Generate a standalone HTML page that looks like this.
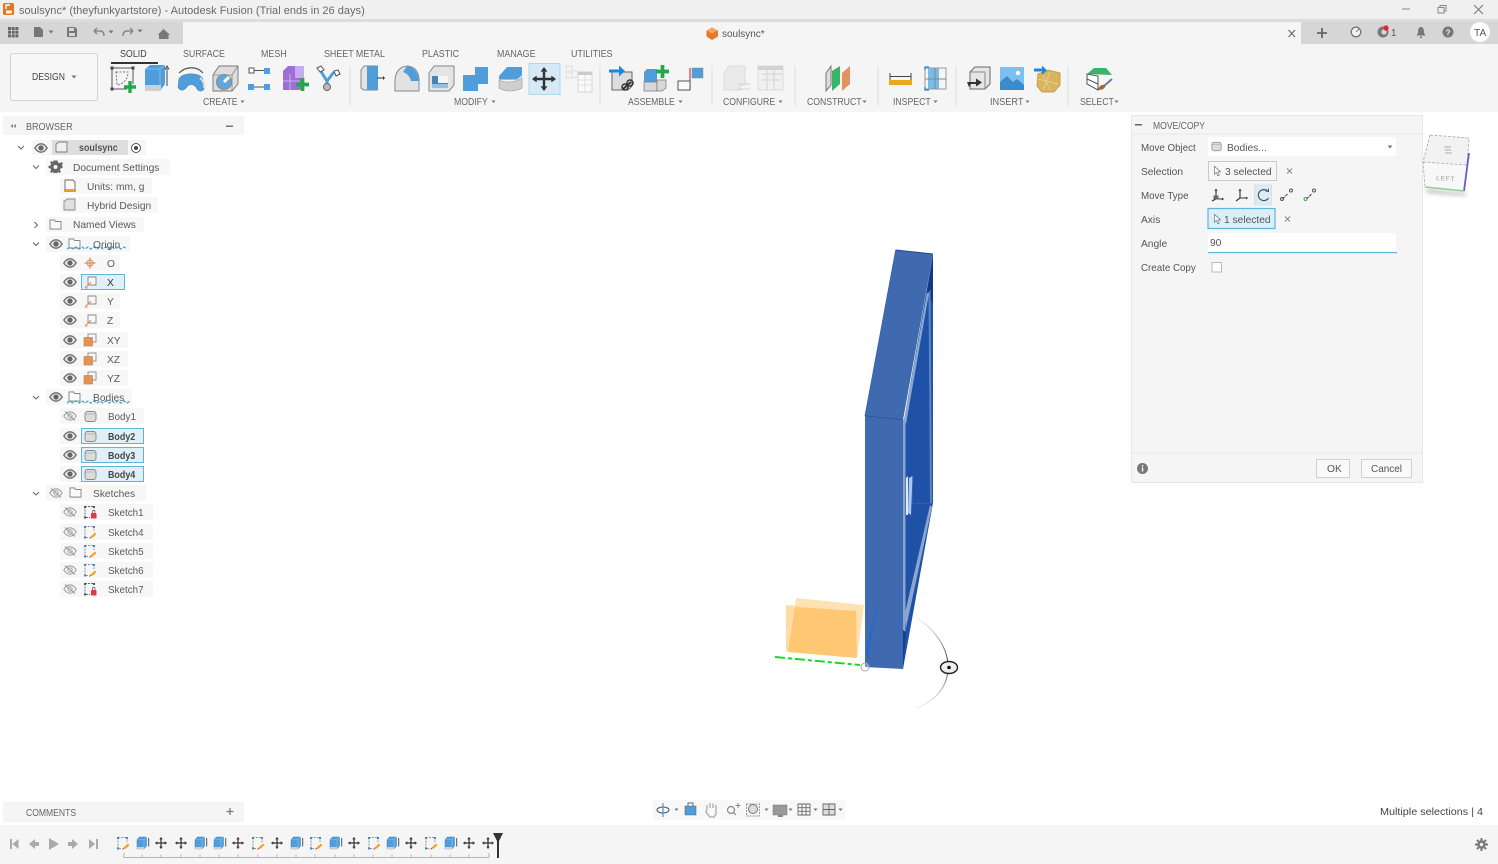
<!DOCTYPE html>
<html lang="en"><head><meta charset="utf-8"><title>soulsync - Autodesk Fusion</title>
<style>
html,body{margin:0;padding:0;background:#fff;width:1498px;height:864px;overflow:hidden}
svg{display:block;position:absolute;left:0;top:0;filter:blur(.3px)}
text{font-family:"Liberation Sans",sans-serif;font-size:10.5px;fill:#5a5a5a;transform-box:fill-box;transform-origin:0 50%;transform:scaleX(var(--s,.975))}
.tab{font-size:10px;fill:#666;--s:.89}
.grp{font-size:10px;fill:#666;--s:.87}
.c{--s:.86}
.l{--s:.94}
.b{font-weight:bold;fill:#454545;--s:.85}
</style></head><body>
<svg width="1498" height="864" viewBox="0 0 1498 864" xmlns="http://www.w3.org/2000/svg">
<defs>
<symbol id="eye" viewBox="0 0 14 10" overflow="visible"><path d="M.8 5C3 1.6 5 .8 7 .8S11 1.6 13.2 5C11 8.4 9 9.2 7 9.2S3 8.4 .8 5Z" fill="#e8e8e8" stroke="#6f6f6f" stroke-width="1.3"/><circle cx="7" cy="5" r="2.6" fill="#666"/></symbol>
<symbol id="eyeoff" viewBox="0 0 14 10" overflow="visible"><path d="M.8 5C3 1.6 5 .8 7 .8S11 1.6 13.2 5C11 8.4 9 9.2 7 9.2S3 8.4 .8 5Z" fill="none" stroke="#a0a0a0" stroke-width="1.1"/><circle cx="7" cy="5" r="2.2" fill="none" stroke="#a0a0a0"/><path d="M2 .5 12 9.5" stroke="#999" stroke-width="1.1"/></symbol>
<symbol id="folder" viewBox="0 0 14 12" overflow="visible"><path d="M1 11V1H6L7 2.8H13V11Z" fill="#fafafa" stroke="#777" stroke-width=".9"/></symbol>
<symbol id="body" viewBox="0 0 13 13" overflow="visible"><rect x="1" y="1.5" width="11" height="10" rx="2.5" fill="#dcdcdc" stroke="#888" stroke-width=".9"/><path d="M1.5 4H11.5" stroke="#aaa" stroke-width=".7"/></symbol>
<symbol id="plane" viewBox="0 0 14 14" overflow="visible"><path d="M4 2H12V10H4Z" fill="#f8f8f8" stroke="#888" stroke-width=".9"/><path d="M1 13 7 7" stroke="#e08a50" stroke-width="1.1"/><path d="M1 13H4" stroke="#e08a50" stroke-width=".7"/></symbol>
<symbol id="pl2" viewBox="0 0 14 14" overflow="visible"><rect x="5" y="1" width="8" height="8" fill="#fafafa" stroke="#888" stroke-width=".9"/><rect x="1" y="4.5" width="8.5" height="8.5" fill="#e19456" stroke="#c97b3f" stroke-width=".6"/></symbol>
<symbol id="sklock" viewBox="0 0 14 14" overflow="visible"><path d="M2 1.5H11M2 1.5V12.5H7" fill="none" stroke="#666" stroke-width=".9" stroke-dasharray="2 1"/><rect x="1" y="1" width="2" height="2" fill="#555"/><rect x="1" y="11.5" width="2" height="2" fill="#555"/><rect x="10" y="1" width="2" height="2" fill="#555"/><rect x="8" y="8" width="5.5" height="5.5" rx=".8" fill="#d83c48"/><path d="M9.4 8V6.6a1.3 1.3 0 0 1 2.6 0V8" fill="none" stroke="#b7454f" stroke-width=".8"/></symbol>
<symbol id="skedit" viewBox="0 0 14 14" overflow="visible"><path d="M2 1.5H11V6M2 1.5V12.5H6" fill="none" stroke="#777" stroke-width=".8" stroke-dasharray="2 1"/><rect x="1" y="1" width="2" height="2" fill="#3b8bd0"/><rect x="1" y="11.5" width="2" height="2" fill="#3b8bd0"/><rect x="10" y="1" width="2" height="2" fill="#3b8bd0"/><path d="M7 13 8 11 12 7.5 13.5 9 10 12.5Z" fill="#f0a526"/><path d="M6.5 13.5 8 12" stroke="#d9462e" stroke-width="1"/></symbol>
<symbol id="extr" viewBox="0 0 14 14" overflow="visible"><path d="M1 3.5 3.5 1H10.5V10L8 13H1Z" fill="#4f9edb" stroke="#3b7fb5" stroke-width=".5"/><path d="M1 3.5H8V13M8 3.5 10.5 1" fill="none" stroke="#8cc3ea" stroke-width=".6"/><path d="M1 11H8V13.5H1Z" fill="#cfcfcf"/><path d="M12.7 2V10.5" stroke="#555" stroke-width="1"/></symbol>
<symbol id="move" viewBox="0 0 14 14" overflow="visible"><path d="M7 .8V13.2M.8 7H13.2" stroke="#333" stroke-width="1.4"/><path d="M7 0 9 2.7H5ZM7 14 9 11.3H5ZM0 7 2.7 5V9ZM14 7 11.3 5V9Z" fill="#333"/></symbol>
<symbol id="plus" viewBox="0 0 12 12" overflow="visible"><path d="M4.3 0H7.7V4.3H12V7.7H7.7V12H4.3V7.7H0V4.3H4.3Z" fill="#22a84a"/></symbol>
<symbol id="caret" viewBox="0 0 6 4" overflow="visible"><path d="M.5 .5H5.5L3 3.5Z" fill="#777"/></symbol>
<symbol id="cursor" viewBox="0 0 10 12" overflow="visible"><path d="M1.5 .8 8.5 7H5.4L6.8 10.6 5.2 11.2 3.7 7.6 1.5 9.6Z" fill="#fff" stroke="#777" stroke-width=".8"/></symbol>
<linearGradient id="arc" gradientUnits="userSpaceOnUse" x1="0" y1="618" x2="0" y2="708"><stop offset="0" stop-color="#999" stop-opacity=".15"/><stop offset=".45" stop-color="#444"/><stop offset=".55" stop-color="#444"/><stop offset="1" stop-color="#999" stop-opacity=".15"/></linearGradient>
<filter id="sh" x="-30%" y="-30%" width="160%" height="160%"><feGaussianBlur stdDeviation="2"/></filter>
</defs>

<!-- Frame -->
<rect width="1498" height="864" fill="#fff"/>
<rect width="1498" height="19" fill="#f0f0f0"/>
<rect y="19" width="1498" height="3" fill="#dcdcdc"/>
<rect y="22" width="1498" height="90" fill="#f5f5f5"/>
<rect y="22" width="183" height="22" fill="#d6d6d6"/>
<rect x="1301" y="22" width="197" height="22" fill="#d6d6d6"/>

<!-- Title -->
<rect x="3" y="3" width="11" height="12" rx="1.5" fill="#e8761e"/><rect x="6" y="10.5" width="6" height="3" fill="#fff" opacity=".9"/><path d="M6 9V5H10" stroke="#fff" stroke-width="1.4" fill="none"/>
<text x="19" y="14" style="font-size:11px;fill:#6a6a6a;--s:1.005">soulsync* (theyfunkyartstore) - Autodesk Fusion (Trial ends in 26 days)</text>
<path d="M1402 9H1410" stroke="#888" stroke-width="1"/>
<path d="M1438 7.5H1444V13H1438ZM1440 7.5V5.5H1446V11H1444" fill="none" stroke="#888" stroke-width="1"/>
<path d="M1474 5 1483 14M1483 5 1474 14" stroke="#777" stroke-width="1"/>

<!-- Quick access -->
<g fill="#666"><rect x="8" y="27" width="3" height="3"/><rect x="11.7" y="27" width="3" height="3"/><rect x="15.4" y="27" width="3" height="3"/><rect x="8" y="30.7" width="3" height="3"/><rect x="11.7" y="30.7" width="3" height="3"/><rect x="15.4" y="30.7" width="3" height="3"/><rect x="8" y="34.4" width="3" height="3"/><rect x="11.7" y="34.4" width="3" height="3"/><rect x="15.4" y="34.4" width="3" height="3"/></g>
<path d="M34 27H40L43 30V37H34Z" fill="#777"/><use href="#caret" x="48" y="30" width="6" height="4"/>
<path d="M67 27H75L77 29V37H67Z" fill="#777"/><rect x="69" y="28" width="5" height="3" fill="#d6d6d6"/><rect x="69" y="33" width="6" height="3" fill="#d6d6d6"/>
<path d="M94 31H100C103 31 104 33 104 36M94 31 97 28M94 31 97 34" fill="none" stroke="#888" stroke-width="1.5"/><use href="#caret" x="108" y="30" width="6" height="4"/>
<path d="M133 31H127C124 31 123 33 123 36M133 31 130 28M133 31 130 34" fill="none" stroke="#888" stroke-width="1.5"/><use href="#caret" x="137" y="29" width="6" height="4"/>
<path d="M163.500 29 170 35H168.500V39H159V35H157.500Z" fill="#777"/>

<!-- Doc tab -->
<path d="M712 27.500 718 30.500V36.500L712 40 706.500 36.500V30.500Z" fill="#e8782a"/><path d="M706.500 30.500 712 33.500 718 30.500 712 27.500Z" fill="#f5a465"/>
<text x="722" y="37" style="font-size:10.5px;fill:#555;--s:.95">soulsync*</text>
<path d="M1288.500 30 1295 37M1295 30 1288.500 37" stroke="#666" stroke-width="1.1"/>
<path d="M1322 28V38M1317 33H1327" stroke="#666" stroke-width="1.800"/>
<circle cx="1356" cy="32" r="4.800" fill="#f3f3f3" stroke="#777" stroke-width="1.300"/><path d="M1356 32 1359 29" stroke="#777"/>
<circle cx="1383" cy="32" r="5.500" fill="#777"/><circle cx="1384" cy="32" r="2.600" fill="#d6d6d6"/><circle cx="1386" cy="28" r="2.600" fill="#e0242c"/>
<text x="1391" y="36" style="font-size:10px;fill:#555">1</text>
<path d="M1421 27C1418.500 27 1418 29.500 1418 33L1416.500 35.500H1425.500L1424 33C1424 29.500 1423.500 27 1421 27ZM1420 36.500H1422V38H1420Z" fill="#777"/>
<circle cx="1448" cy="32" r="5.500" fill="#777"/><text x="1445.500" y="35.500" style="font-size:8.500px;font-weight:bold;fill:#eee">?</text>
<circle cx="1480" cy="32" r="10" fill="#fff"/><text x="1474" y="36" style="font-size:10.500px;fill:#555">TA</text>

<!-- Tabs -->
<text class="tab" x="120" y="57" style="fill:#444">SOLID</text>
<rect x="111" y="62" width="47" height="2" fill="#333"/>
<text class="tab" x="183" y="57">SURFACE</text>
<text class="tab" x="261" y="57">MESH</text>
<text class="tab" x="324" y="57">SHEET METAL</text>
<text class="tab" x="422" y="57">PLASTIC</text>
<text class="tab" x="497" y="57">MANAGE</text>
<text class="tab" x="571" y="57">UTILITIES</text>

<!-- Design -->
<rect x="10.500" y="53.500" width="87" height="47" rx="2" fill="#f7f7f7" stroke="#d4d4d4"/>
<text x="32" y="80" class="c" style="font-size:10px;fill:#444">DESIGN</text><use href="#caret" x="71" y="75" width="6" height="4"/>

<!-- CREATE icons -->
<g><path d="M112 68H133V84M112 68V89H127" fill="none" stroke="#555" stroke-width="1"/><g fill="#444"><rect x="110.500" y="66.500" width="3" height="3"/><rect x="131.500" y="66.500" width="3" height="3"/><rect x="110.500" y="87.500" width="3" height="3"/></g><path d="M116 72H128C128 79 124 84 117 85Z" fill="none" stroke="#777" stroke-dasharray="2 1.500"/><use href="#plus" x="124" y="81" width="12" height="12"/></g>
<g><path d="M145 69 150 65H165V84L160 91H145Z" fill="#4f9edb"/><path d="M145 69H160V91M160 69 165 65" fill="none" stroke="#8cc3ea" stroke-width=".8"/><rect x="145" y="85" width="16" height="6" fill="#cfcfcf"/><path d="M167 68V86M165 69.500 167 66 169 69.500" fill="none" stroke="#444"/></g>
<g><path d="M179 79C183 72 199 72 203 79L204 89C202 92 198 92 196 87C192 83 189 84 186 88C183 91 180 91 178 87Z" fill="#4f9edb" stroke="#3f86bd" stroke-width=".6"/><path d="M179 73C186 66 197 66 203 73" fill="none" stroke="#555" stroke-width="1.200"/><path d="M200 78C203 80 205 84 204 88" stroke="#ddd" fill="none" stroke-width="2"/></g>
<g><path d="M213 75 219 66H238V84L232 91H213Z" fill="#ddd" stroke="#777" stroke-width=".9"/><path d="M213 75H232V91M232 75 238 66" fill="none" stroke="#888" stroke-width=".8"/><circle cx="224" cy="82" r="7.500" fill="#5fa8dd" stroke="#888"/><path d="M224 82 229 77" stroke="#fff" stroke-width="3"/></g>
<g><rect x="249" y="68" width="5" height="5" fill="#fff" stroke="#555"/><rect x="264" y="68" width="6" height="6" fill="#4f9edb"/><rect x="248" y="84" width="6" height="6" fill="#4f9edb"/><rect x="264" y="84" width="6" height="6" fill="#4f9edb"/><path d="M254 70.500H264M254 87H264" stroke="#555"/></g>
<g><path d="M283 71 288 66H304V84L300 90H283Z" fill="#9b6fd6"/><path d="M295 66H304V78H295Z" fill="#c7aceb"/><path d="M290 74V90M283 81H300" stroke="#c9b2ec"/><use href="#plus" x="296" y="78" width="13" height="13"/></g>
<g><path d="M320 70 327 81 334 72M327 81V88" fill="none" stroke="#4f9edb" stroke-width="3"/><path d="M317 68 321 66 324 70 320 72Z" fill="#fff" stroke="#555"/><path d="M334 71 338 70 340 74 336 76Z" fill="#fff" stroke="#555"/><circle cx="327" cy="87" r="3.500" fill="#bbb" stroke="#666"/></g>
<text class="grp" x="203" y="105">CREATE</text><use href="#caret" x="240" y="100" width="5" height="3.500"/>
<rect x="349.500" y="66" width="1" height="40" fill="#ddd"/>

<!-- MODIFY -->
<g><path d="M361 70 364 66H377V90H364L361 88Z" fill="#e4e4e4" stroke="#888"/><rect x="367" y="66" width="11" height="24" fill="#4f9edb"/><path d="M377 78H383" stroke="#333"/><path d="M383 76 385 78 383 80Z" fill="#333"/></g>
<g><path d="M395 81C395 72 400 66 408 66C415 67 419 72 419 80V91H395Z" fill="#e2e2e2" stroke="#888"/><path d="M407 66C414 67 419 73 419 81L411 81C410 77 408 74 403 72Z" fill="#4f9edb"/></g>
<g><path d="M429 73 434 66H454V85L449 91H429Z" fill="#e4e4e4" stroke="#888"/><path d="M432 76H448V88H432Z" fill="#3f86bd"/><path d="M438 76H448V83H438Z" fill="#f4f4f4"/><path d="M432 84H448V88H432Z" fill="#8cc3ea"/></g>
<g><path d="M463 75H475V67H488V84H478V91H463Z" fill="#4f9edb"/></g>
<g><path d="M499 80C505 83 515 83 522 78V88C515 92 505 92 499 88Z" fill="#cfcfcf" stroke="#999" stroke-width=".6"/><path d="M499 76 507 67H522V75L517 80H499Z" fill="#4f9edb"/><path d="M499 79.500H517L522 75.500" fill="none" stroke="#8cc3ea"/></g>
<rect x="529" y="63.500" width="31" height="31" fill="#d6eaf6" stroke="#b3d6ea"/>
<use href="#move" x="532" y="67" width="24" height="24"/>
<g opacity=".55"><g fill="none" stroke="#ccc"><rect x="566" y="66" width="6" height="5"/><rect x="572" y="71" width="6" height="6"/><rect x="566" y="73" width="6" height="5"/></g><rect x="578" y="72" width="14" height="20" fill="#fff" stroke="#bbb"/><rect x="578" y="72" width="14" height="3" fill="#aaa"/><path d="M578 80H592M578 85H592M585 75V92" stroke="#ccc"/></g>
<text class="grp" x="454" y="105">MODIFY</text><use href="#caret" x="491" y="100" width="5" height="3.500"/>
<rect x="599.500" y="66" width="1" height="40" fill="#ddd"/>

<!-- ASSEMBLE -->
<g><path d="M612 72H632V86L628 90H612Z" fill="#ddd" stroke="#666"/><path d="M609 71H620" stroke="#1e88d8" stroke-width="3"/><path d="M619 65.500 625 71 619 76.500Z" fill="#1e88d8"/><path d="M623 89 631 82" stroke="#333" stroke-width="2"/><circle cx="625" cy="87" r="3" fill="none" stroke="#333" stroke-width="1.500"/><circle cx="630" cy="83" r="3" fill="none" stroke="#333" stroke-width="1.500"/></g>
<g><path d="M644 72 647 69H657V82H644Z" fill="#4f9edb"/><path d="M644 82H657V91H644Z" fill="#d8d8d8" stroke="#777" stroke-width=".7"/><path d="M657 80H666V88L662 91H657Z" fill="#d8d8d8" stroke="#777" stroke-width=".7"/><use href="#plus" x="656" y="65" width="13" height="13"/></g>
<g><path d="M690 68V90" stroke="#c23b45" stroke-width="1.200"/><rect x="678" y="81" width="12" height="9" fill="#fafafa" stroke="#555"/><rect x="692" y="68" width="11" height="10" fill="#4f9edb" stroke="#888" stroke-width=".5"/></g>
<text class="grp" x="628" y="105">ASSEMBLE</text><use href="#caret" x="678" y="100" width="5" height="3.500"/>
<rect x="711.500" y="66" width="1" height="40" fill="#ddd"/>

<!-- CONFIGURE -->
<g opacity=".6"><path d="M724 73 729 66H745V85H740V90H724Z" fill="#e4e4e4" stroke="#ccc"/><path d="M738 84H750M738 89H750" stroke="#bbb"/><rect x="758" y="66" width="25" height="24" fill="#eee" stroke="#ccc"/><rect x="758" y="66" width="25" height="4" fill="#bbb"/><path d="M762 74H782M762 80H780M767 70V90M774 70V90" stroke="#bbb"/></g>
<text class="grp" x="723" y="105">CONFIGURE</text><use href="#caret" x="778" y="100" width="5" height="3.500"/>
<rect x="794.500" y="66" width="1" height="40" fill="#ddd"/>

<!-- CONSTRUCT -->
<g><path d="M826 73 831 66V85L826 91Z" fill="#ddd" stroke="#777"/><path d="M832 71 840 66V84L832 91Z" fill="#3bb46a"/><path d="M842 73 850 66V84L842 91Z" fill="#e49360"/></g>
<text class="grp" x="807" y="105">CONSTRUCT</text><use href="#caret" x="862" y="100" width="5" height="3.500"/>
<rect x="877.500" y="66" width="1" height="40" fill="#ddd"/>

<!-- INSPECT -->
<g><path d="M890 73V80M911 73V80M890 76.500H911" stroke="#444"/><rect x="889" y="80" width="23" height="5" fill="#e8a91e"/><rect x="928" y="68" width="11" height="11" fill="#78bcea"/><rect x="928" y="79" width="11" height="10" fill="#78bcea"/><path d="M925 68H946V89H925Z" fill="none" stroke="#999"/><path d="M935 68V89M925 79H946" stroke="#888"/><path d="M929 67H925V70M925 87V90H929" fill="none" stroke="#1e88d8" stroke-width="1.300"/></g>
<text class="grp" x="893" y="105">INSPECT</text><use href="#caret" x="933" y="100" width="5" height="3.500"/>
<rect x="955.500" y="66" width="1" height="40" fill="#ddd"/>

<!-- INSERT -->
<g><path d="M970 72 975 67H990V84L985 89H970Z" fill="#e6e6e6" stroke="#666"/><path d="M970 72H985V89" fill="none" stroke="#888"/><path d="M967 82H976V78.500L982 82.500 976 86.500V84H971L969 87Z" fill="#333"/></g>
<g><rect x="1000" y="67" width="24" height="23" fill="#7bc0f0"/><circle cx="1018" cy="73" r="2.200" fill="#fff"/><path d="M1000 90V82L1007 76 1013 82 1017 79 1024 85V90Z" fill="#3a8bcb"/></g>
<g><path d="M1038 74 1048 70 1060 73V85L1054 92H1042L1037 86Z" fill="#d9b45e" stroke="#c79f46"/><path d="M1038 79 1058 84M1042 73 1050 90M1050 72 1043 90" stroke="#ecd391" stroke-width=".8"/><path d="M1034 70H1043" stroke="#1e88d8" stroke-width="3"/><path d="M1042 65.500 1047 70.500 1042 75Z" fill="#1e88d8"/></g>
<text class="grp" x="990" y="105" style="--s:.92">INSERT</text><use href="#caret" x="1025" y="100" width="5" height="3.500"/>
<rect x="1067.500" y="66" width="1" height="40" fill="#ddd"/>

<!-- SELECT -->
<g><path d="M1087 74 1094 68H1106L1112 75Z" fill="#3bb46a"/><path d="M1087 74V84L1098 90V76Z" fill="#fff" stroke="#555"/><path d="M1087 79 1098 84" stroke="#555"/><path d="M1112 79 1104 86" stroke="#6d7c9a" stroke-width="2"/><path d="M1098 90C1099 86 1102 84 1105 85C1106 88 1103 90 1098 90Z" fill="#9b6a3a"/></g>
<text class="grp" x="1080" y="105">SELECT</text><use href="#caret" x="1114" y="100" width="5" height="3.500"/>

<!-- Browser -->
<rect x="3" y="116" width="241" height="19" fill="#f5f5f5"/>
<path d="M13 124 10.500 126 13 128ZM16 124 13.500 126 16 128Z" fill="#888"/>
<text x="26" y="130" class="c" style="fill:#666">BROWSER</text>
<rect x="226" y="125.500" width="7" height="1.500" fill="#777"/>

<!-- Tree backgrounds -->
<g fill="#f7f7f7">
<rect x="32" y="140" width="114" height="15"/>
<rect x="46" y="159" width="124" height="16"/><rect x="60" y="178" width="92" height="16"/><rect x="60" y="197" width="98" height="16"/>
<rect x="46" y="217" width="98" height="15"/><rect x="46" y="236" width="84" height="16"/>
<rect x="60" y="255" width="60" height="16"/><rect x="60" y="274" width="20" height="16"/><rect x="60" y="293" width="60" height="16"/><rect x="60" y="312" width="60" height="16"/>
<rect x="60" y="332" width="68" height="16"/><rect x="60" y="351" width="68" height="16"/><rect x="60" y="370" width="68" height="16"/>
<rect x="46" y="389" width="86" height="16"/><rect x="60" y="408" width="84" height="16"/><rect x="60" y="428" width="20" height="16"/><rect x="60" y="447" width="20" height="16"/><rect x="60" y="466" width="20" height="16"/>
<rect x="46" y="485" width="100" height="16"/><rect x="60" y="504" width="93" height="16"/><rect x="60" y="524" width="93" height="16"/><rect x="60" y="543" width="93" height="16"/><rect x="60" y="562" width="93" height="16"/><rect x="60" y="581" width="93" height="16"/>
</g>
<rect x="52" y="140" width="76" height="15" fill="#dedede"/>
<g fill="#dff0f9" stroke="#62b3dc"><rect x="81.500" y="274.500" width="43" height="15"/><rect x="81.500" y="428.500" width="62" height="15"/><rect x="81.500" y="447.500" width="62" height="15"/><rect x="81.500" y="466.500" width="62" height="15"/></g>

<!-- Chevrons -->
<g fill="none" stroke="#666" stroke-width="1"><path d="M18 146 21 149 24 146M33 165.500 36 168.500 39 165.500M33 242.500 36 245.500 39 242.500M33 396 36 399 39 396M33 492 36 495 39 492M34.500 222 37.500 225 34.500 228"/></g>

<!-- Tree icons -->
<use href="#eye" x="34" y="143" width="14" height="10"/>
<path d="M56 144 59 142H67V152H56Z" fill="#efefef" stroke="#777" stroke-width=".9"/>
<circle cx="136" cy="148" r="4.500" fill="#fff" stroke="#555"/><circle cx="136" cy="148" r="2" fill="#444"/>
<path d="M55.500 161.500 57.500 161.500 58 163.500 60 164.300 61.700 163 63 164.300 61.800 166 62.500 167 62.500 169 60.500 169.500 59.800 171 61 172.600 59.700 174 58 172.800 57.500 174 53.500 174 53 172.800 51.300 174 50 172.600 51.200 171 50.500 169.500 48.500 169 48.500 167 50.500 166.500 51.200 165 50 163.500 51.300 162 53 163.300 53.500 161.500Z" fill="#666" transform="translate(0,-1)"/>
<circle cx="55.500" cy="167" r="2" fill="#f7f7f7"/>
<path d="M65 180H73L75 182V190H65Z" fill="#fafafa" stroke="#666" stroke-width=".9"/><rect x="64" y="190" width="12" height="2" fill="#e3a21a"/>
<path d="M65 201 67 199H75V210H64V201Z" fill="#e0e0e0" stroke="#888" stroke-width=".9"/>
<use href="#folder" x="49" y="219" width="13" height="11"/>
<use href="#eye" x="49" y="239" width="14" height="10"/><use href="#folder" x="68" y="238" width="13" height="11"/>
<path d="M67 249 70 247 73 249 76 247 79 249 82 247 85 249 88 247 91 249 94 247 97 249 100 247 103 249 106 247 109 249 112 247 115 249 118 247 121 249 124 247 127 249" fill="none" stroke="#3b9ad8" stroke-width="1.200" stroke-dasharray="3 1.500"/>
<use href="#eye" x="63" y="258" width="14" height="10"/>
<g stroke="#e08a50" fill="none"><circle cx="90" cy="263" r="3"/><path d="M90 257.500V268.500M84.500 263H95.500" stroke-width="1.200"/></g>
<use href="#eye" x="63" y="277" width="14" height="10"/><use href="#plane" x="84" y="275" width="14" height="14"/>
<use href="#eye" x="63" y="296" width="14" height="10"/><use href="#plane" x="84" y="294" width="14" height="14"/>
<use href="#eye" x="63" y="315" width="14" height="10"/><use href="#plane" x="84" y="313" width="14" height="14"/>
<use href="#eye" x="63" y="335" width="14" height="10"/><use href="#pl2" x="83" y="333" width="14" height="14"/>
<use href="#eye" x="63" y="354" width="14" height="10"/><use href="#pl2" x="83" y="352" width="14" height="14"/>
<use href="#eye" x="63" y="373" width="14" height="10"/><use href="#pl2" x="83" y="371" width="14" height="14"/>
<use href="#eye" x="49" y="392" width="14" height="10"/><use href="#folder" x="68" y="391" width="13" height="11"/>
<path d="M67 403 70 401 73 403 76 401 79 403 82 401 85 403 88 401 91 403 94 401 97 403 100 401 103 403 106 401 109 403 112 401 115 403 118 401 121 403 124 401 127 403 130 401" fill="none" stroke="#3b9ad8" stroke-width="1.200" stroke-dasharray="3 1.500"/>
<use href="#eyeoff" x="63" y="411" width="14" height="10"/><use href="#body" x="84" y="410" width="13" height="13"/>
<use href="#eye" x="63" y="431" width="14" height="10"/><use href="#body" x="84" y="430" width="13" height="13"/>
<use href="#eye" x="63" y="450" width="14" height="10"/><use href="#body" x="84" y="449" width="13" height="13"/>
<use href="#eye" x="63" y="469" width="14" height="10"/><use href="#body" x="84" y="468" width="13" height="13"/>
<use href="#eyeoff" x="49" y="488" width="14" height="10"/><use href="#folder" x="69" y="487" width="13" height="11"/>
<use href="#eyeoff" x="63" y="507" width="14" height="10"/><use href="#sklock" x="83" y="505" width="14" height="14"/>
<use href="#eyeoff" x="63" y="527" width="14" height="10"/><use href="#skedit" x="83" y="525" width="14" height="14"/>
<use href="#eyeoff" x="63" y="546" width="14" height="10"/><use href="#skedit" x="83" y="544" width="14" height="14"/>
<use href="#eyeoff" x="63" y="565" width="14" height="10"/><use href="#skedit" x="83" y="563" width="14" height="14"/>
<use href="#eyeoff" x="63" y="584" width="14" height="10"/><use href="#sklock" x="83" y="582" width="14" height="14"/>

<!-- Tree text -->
<text x="79" y="151" class="b" style="fill:#555">soulsync</text>
<text x="73" y="171">Document Settings</text>
<text x="87" y="190">Units: mm, g</text>
<text x="87" y="209">Hybrid Design</text>
<text x="73" y="228">Named Views</text>
<text x="93" y="248">Origin</text>
<text x="107" y="267">O</text>
<text x="107" y="286" style="fill:#333">X</text>
<text x="107" y="305">Y</text>
<text x="107" y="324">Z</text>
<text x="107" y="344">XY</text>
<text x="107" y="363">XZ</text>
<text x="107" y="382">YZ</text>
<text x="93" y="401">Bodies</text>
<text x="108" y="420" class="l">Body1</text>
<text x="108" y="440" class="b">Body2</text>
<text x="108" y="459" class="b">Body3</text>
<text x="108" y="478" class="b">Body4</text>
<text x="93" y="497">Sketches</text>
<text x="108" y="516" class="l">Sketch1</text>
<text x="108" y="536" class="l">Sketch4</text>
<text x="108" y="555" class="l">Sketch5</text>
<text x="108" y="574" class="l">Sketch6</text>
<text x="108" y="593" class="l">Sketch7</text>

<!-- Move/Copy panel -->
<rect x="1131.500" y="115.500" width="291" height="367" fill="#f5f5f5" stroke="#e6e6e6"/>
<path d="M1131 134H1423M1131 453H1423" stroke="#e6e6e6"/>
<rect x="1135" y="124" width="7" height="1.500" fill="#666"/>
<text x="1153" y="129" class="c" style="font-size:10px;fill:#666">MOVE/COPY</text>
<text x="1141" y="151" style="fill:#555;--s:.93">Move Object</text>
<text x="1141" y="175" style="fill:#555">Selection</text>
<text x="1141" y="199" style="fill:#555;--s:.93">Move Type</text>
<text x="1141" y="223" style="fill:#555">Axis</text>
<text x="1141" y="247" style="fill:#555">Angle</text>
<text x="1141" y="271" style="fill:#555;--s:.93">Create Copy</text>
<rect x="1208" y="137" width="188" height="19" fill="#fff"/>
<use href="#body" x="1211" y="141" width="11" height="11"/>
<text x="1227" y="151" style="fill:#555">Bodies...</text>
<use href="#caret" x="1387" y="145" width="6" height="4"/>
<rect x="1208.500" y="161.500" width="68" height="19" fill="#f7f7f7" stroke="#c9c9c9"/>
<use href="#cursor" x="1213" y="165" width="9" height="12"/>
<text x="1225" y="175" style="fill:#555">3 selected</text>
<path d="M1287 168.500 1292 173.500M1292 168.500 1287 173.500" stroke="#888"/>
<g fill="none" stroke="#333" stroke-width="1.100">
<path d="M1216 190V199M1216 199 1212 201M1216 199H1222"/><rect x="1213.500" y="195.500" width="5" height="4" fill="#666" stroke="none"/>
<path d="M1240 190V198M1240 198 1236 201M1240 198H1246"/>
</g>
<path d="M1216 188.500 1214.500 191H1217.500ZM1240 188.500 1238.500 191H1241.500ZM1222 197.500 1224 199 1222 200.500ZM1246 196.500 1248 198 1246 199.500Z" fill="#333"/>
<rect x="1254.500" y="185" width="17" height="20" fill="#dbecf6" stroke="#cfe3ef"/>
<path d="M1268 191.500A5.500 5.500 0 1 0 1268.500 198" fill="none" stroke="#555" stroke-width="1.200"/><path d="M1265.500 191 1268.500 191.500 1268.500 188.500" fill="none" stroke="#555"/>
<g fill="none" stroke="#333"><path d="M1282.500 199 1288 193.500" stroke-dasharray="3 1"/><circle cx="1282" cy="199" r="1.500" stroke="#555"/><circle cx="1291" cy="190.500" r="1.500" stroke="#555"/></g>
<g fill="none" stroke="#333"><path d="M1306.500 199 1312 193.500" stroke-dasharray="3 1"/><circle cx="1305.500" cy="199" r="1.500" stroke="#46a05a"/><circle cx="1314" cy="190.500" r="1.500" stroke="#555"/></g>
<rect x="1208" y="208.500" width="67" height="20" fill="#dbeff9" stroke="#62b3dc" stroke-width="1.200"/>
<use href="#cursor" x="1213" y="213" width="9" height="12"/>
<text x="1224" y="223" style="fill:#555">1 selected</text>
<path d="M1285 216.500 1290 221.500M1290 216.500 1285 221.500" stroke="#888"/>
<rect x="1208" y="233" width="188" height="19" fill="#fff"/>
<rect x="1208" y="252" width="189" height="1.200" fill="#62b3dc"/>
<text x="1210" y="246" style="fill:#555">90</text>
<rect x="1212" y="262.500" width="9.500" height="9.500" fill="#fff" stroke="#bbb"/>
<circle cx="1142.500" cy="468.500" r="5.500" fill="#777"/><rect x="1141.800" y="467.500" width="1.500" height="4" fill="#f5f5f5"/><rect x="1141.800" y="465" width="1.500" height="1.500" fill="#f5f5f5"/>
<rect x="1316.500" y="459.500" width="33" height="18" fill="#f9f9f9" stroke="#d0d0d0"/>
<text x="1327" y="472" style="fill:#555">OK</text>
<rect x="1361.500" y="459.500" width="50" height="18" fill="#f9f9f9" stroke="#d0d0d0"/>
<text x="1371" y="472" style="fill:#555;--s:.95">Cancel</text>

<!-- View cube -->
<path d="M1425 189 1464 193 1468 196 1428 193Z" fill="#bbb" filter="url(#sh)"/>
<path d="M1430 135 1469 138 1467 165 1423 162Z" fill="#f2f2f2"/>
<path d="M1423 162 1467 165 1464 191 1425 187Z" fill="#f8f8f8"/>
<path d="M1430 135 1469 138 1467 165M1430 135 1423 162 1425 187M1423 162 1467 165" fill="none" stroke="#aaa" stroke-width=".8" stroke-dasharray="3 1.500"/>
<path d="M1469 153 1464 191" stroke="#6a5cc9" stroke-width="1.800"/>
<path d="M1425 187 1464 191" stroke="#8fd18a" stroke-width="1.500"/>
<g transform="rotate(4 1436 180)"><text x="1436" y="180" style="font-size:6.500px;fill:#999;letter-spacing:.8px;--s:1">LEFT</text></g>
<path d="M1444 147H1451M1445 150H1451M1445 153H1452" stroke="#bbb" stroke-width="1.200"/>

<!-- Viewport model -->
<path d="M796 598 864 605 857 658 788 652Z" fill="#ffe2b4"/>
<path d="M786 605 856 611 857 658 786 651Z" fill="#ffdca6"/>
<path d="M795 607 856 611 857 658 788 652Z" fill="#ffc774"/>
<path d="M933 254 933 503 903 669 904 420Z" fill="#1f52a6"/>
<path d="M927 293 933 254V303Z" fill="#123a80"/>
<path d="M928.500 292 930.500 290 932 503 930 503Z" fill="#5f83c0"/>
<path d="M895.700 250 933 254 903 420 865 416Z" fill="#3f6ab0"/>
<path d="M895.700 250 933 254" stroke="#1d4a94" stroke-width="1"/>
<path d="M865 416 903.500 420" stroke="#1d4a94" stroke-width="1"/>
<path d="M865 416 895.700 250" stroke="#3461aa" stroke-width=".8"/>
<path d="M904 420 927 293 929 293 906 424Z" fill="#8da8d2"/>
<path d="M865 416 903 420V669L865 667Z" fill="#3f6ab0"/>
<path d="M903 420H905.500V632H903Z" fill="#8aa3cc"/>
<path d="M905 613 930 505 932 507 906 628Z" fill="#8aa6d0"/>
<path d="M909 478 912.500 476 911 515 908 513Z" fill="#a9c8f5"/>
<path d="M906 478 908 476V515H906Z" fill="#dfeaf8"/>
<path d="M903 630 906 632 903 669Z" fill="#164088"/>
<path d="M933 503 912 504 913 480" fill="none" stroke="#3c66ae" stroke-width=".7"/>
<path d="M878 600 868 660 866 650Z" fill="#2a66c8"/>
<path d="M775 657 860 665" stroke="#18d820" stroke-width="2" stroke-dasharray="10 3 4 3"/>
<circle cx="865" cy="667" r="4" fill="#fff" fill-opacity=".3" stroke="#aaa" stroke-width="1"/>
<path d="M917 618C938 632 948 650 948 667C948 685 938 699 917 708" fill="none" stroke="url(#arc)" stroke-width="1"/>
<ellipse cx="949" cy="667.500" rx="8.500" ry="6" fill="#eee" stroke="#222" stroke-width="1.400"/>
<circle cx="949" cy="667.500" r="1.800" fill="#111"/>

<!-- Comments -->
<rect x="3" y="802" width="241" height="20" fill="#f5f5f5"/>
<text x="26" y="816" class="c" style="font-size:10px;fill:#666">COMMENTS</text>
<path d="M230 808V815M226.500 811.500H233.500" stroke="#777" stroke-width="1.300"/>

<!-- Nav bar -->
<rect x="653" y="800" width="192" height="20" fill="#f8f8f8"/>
<g fill="none" stroke="#555"><ellipse cx="663" cy="810" rx="6" ry="3"/></g><path d="M663 803V817" stroke="#3b9ad8" stroke-width="1.200"/><use href="#caret" x="674" y="808" width="5" height="3.500"/>
<path d="M685 806H696V815H685Z" fill="#4f9edb" stroke="#666" stroke-width=".6"/><path d="M688 806V803H693V806" fill="none" stroke="#666"/>
<path d="M707 809V805M710 808V803M713 808V803.500M716 809V805M707 809 706 812 710 817H714L716 814V809" fill="none" stroke="#aaa" stroke-width="1.300"/>
<circle cx="731" cy="810" r="3.500" fill="none" stroke="#888" stroke-width="1.200"/><path d="M733.500 812.500 736 815" stroke="#888" stroke-width="1.200"/><path d="M738 803V808M735.500 805.500H740.500" stroke="#888"/>
<rect x="746.500" y="804" width="13" height="12" fill="none" stroke="#999" stroke-dasharray="2 1"/><circle cx="753" cy="809" r="4.500" fill="#ddd" stroke="#777"/><use href="#caret" x="764" y="808" width="5" height="3.500"/>
<rect x="773" y="805" width="14" height="10" fill="#999" stroke="#777" stroke-width=".5"/><path d="M778 815V817H783V815" fill="#888"/><use href="#caret" x="788" y="808" width="5" height="3.500"/>
<path d="M798 804H810V815H798ZM802 804V815M806 804V815M798 807.700H810M798 811.300H810" fill="none" stroke="#666" stroke-width=".9"/><use href="#caret" x="813" y="808" width="5" height="3.500"/>
<path d="M823 804H835V815H823ZM829 804V815M823 809.500H835" fill="#ddd" stroke="#666" stroke-width=".9"/><use href="#caret" x="838" y="808" width="5" height="3.500"/>
<text x="1380" y="815" style="fill:#444;--s:1.03">Multiple selections | 4</text>

<!-- Timeline -->
<rect y="825" width="1498" height="39" fill="#f5f5f5"/>
<g fill="#aaa"><path d="M10 839H12V849H10ZM18.500 839V849L12.500 844Z"/><path d="M29 844 35 839V849ZM35 842H39V846H35Z"/><path d="M49 838 59 844 49 850Z"/><path d="M68 842H72V846H68ZM72 839 78 844 72 849Z"/><path d="M89 839 95 844 89 849ZM96 839H98V849H96Z"/></g>
<use href="#skedit" x="116" y="836" width="14" height="14"/>
<use href="#extr" x="136" y="836" width="14" height="14"/>
<use href="#move" x="155" y="837" width="12" height="12"/>
<use href="#move" x="175" y="837" width="12" height="12"/>
<use href="#extr" x="194" y="836" width="14" height="14"/>
<use href="#extr" x="213" y="836" width="14" height="14"/>
<use href="#move" x="232" y="837" width="12" height="12"/>
<use href="#skedit" x="251" y="836" width="14" height="14"/>
<use href="#move" x="271" y="837" width="12" height="12"/>
<use href="#extr" x="290" y="836" width="14" height="14"/>
<use href="#skedit" x="309" y="836" width="14" height="14"/>
<use href="#extr" x="329" y="836" width="14" height="14"/>
<use href="#move" x="348" y="837" width="12" height="12"/>
<use href="#skedit" x="367" y="836" width="14" height="14"/>
<use href="#extr" x="386" y="836" width="14" height="14"/>
<use href="#move" x="405" y="837" width="12" height="12"/>
<use href="#skedit" x="424" y="836" width="14" height="14"/>
<use href="#extr" x="444" y="836" width="14" height="14"/>
<use href="#move" x="463" y="837" width="12" height="12"/>
<use href="#move" x="482" y="837" width="12" height="12"/>
<path d="M124 853V857.500H489V853" fill="none" stroke="#b5b5b5" stroke-width="1"/>
<path d="M142 854.500V857M161 854.500V857M181 854.500V857M200 854.500V857M219 854.500V857M238 854.500V857M258 854.500V857M277 854.500V857M296 854.500V857M315 854.500V857M335 854.500V857M354 854.500V857M373 854.500V857M392 854.500V857M411 854.500V857M431 854.500V857M450 854.500V857M469 854.500V857" stroke="#b5b5b5"/>
<path d="M493 833H503L499 841V858H497V841Z" fill="#333"/>
<g transform="translate(1481.500 844.500)"><circle r="3" fill="none" stroke="#777" stroke-width="2.500"/><path d="M0-6.500V-4M0 4V6.500M-6.500 0H-4M4 0H6.500M-4.600-4.600-3-3M3 3 4.600 4.600M-4.600 4.600-3 3M3-3 4.600-4.600" stroke="#777" stroke-width="2"/></g>
</svg>
</body></html>
